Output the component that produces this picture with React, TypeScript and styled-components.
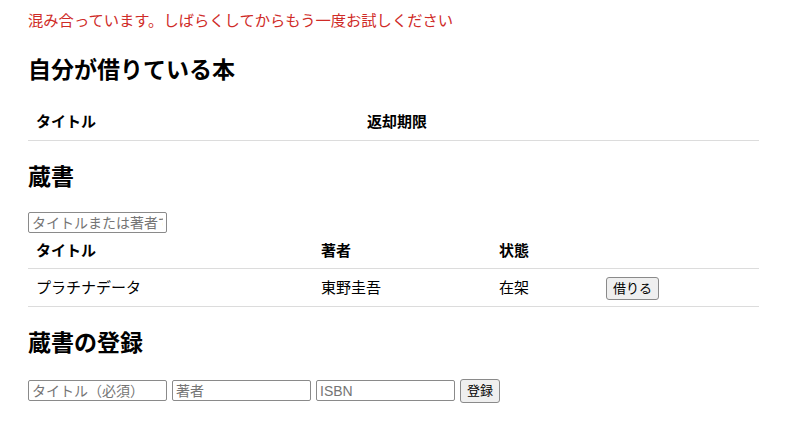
import styled, { createGlobalStyle } from "styled-components";

const GlobalStyle = createGlobalStyle`
  html, body {
    margin: 0;
    padding: 0;
    background: #ffffff;
  }
  body {
    font-family: "Liberation Sans", "Noto Sans CJK JP", sans-serif;
    color: #000;
  }
`;

const Page = styled.div`
  padding: 10px 41px 20px 28px;
  width: 731px;
`;

const ErrorText = styled.div`
  color: #cf2b27;
  font-size: 15.3px;
  line-height: 22px;
  height: 22px;
  white-space: nowrap;
`;

const SectionTitle = styled.h2<{ $top: number }>`
  margin: ${(p) => p.$top}px 0 0;
  font-size: 23px;
  line-height: 30px;
  font-weight: 700;
`;

const Table = styled.table<{ $top: number }>`
  margin-top: ${(p) => p.$top}px;
  width: 731px;
  border-collapse: collapse;
  table-layout: fixed;
  font-size: 15px;
`;

const HeadCell = styled.th<{ $width?: number; $pad?: string }>`
  width: ${(p) => (p.$width ? `${p.$width}px` : "auto")};
  text-align: left;
  font-weight: 700;
  line-height: 22px;
  padding: ${(p) => p.$pad || "8px 8px 7px"};
  border-bottom: 1px solid #dcdcdc;
  box-sizing: border-box;
`;

const Cell = styled.td`
  line-height: 23px;
  height: 23px;
  padding: 6px 8px;
  border-bottom: 1px solid #dcdcdc;
  vertical-align: middle;
`;

const TextInput = styled.input`
  box-sizing: border-box;
  width: 139px;
  height: 21px;
  margin: 0;
  padding: 1px 3px;
  border: 1px solid #8a8a8a;
  border-radius: 2px;
  font-family: "Liberation Sans", "Noto Sans CJK JP", sans-serif;
  font-size: 14px;
  color: #000;
  &::placeholder {
    color: #757575;
  }
`;

const SearchRow = styled.div`
  margin-top: 20px;
  display: flex;
`;

const Button = styled.button<{ $h?: number }>`
  box-sizing: border-box;
  height: ${(p) => p.$h || 23}px;
  margin: 0;
  padding: 0 6px;
  border: 1px solid #8a8a8a;
  border-radius: 3px;
  background: #efefef;
  font-family: "Liberation Sans", "Noto Sans CJK JP", sans-serif;
  font-size: 13px;
  line-height: 1;
  color: #000;
  vertical-align: middle;
  display: inline-flex;
  align-items: center;
`;

const FormRow = styled.form`
  margin-top: 21px;
  display: flex;
  align-items: center;
  gap: 5px;
`;

const App = () => (
  <>
    <GlobalStyle />
    <Page>
      <ErrorText>混み合っています。しばらくしてからもう一度お試しください</ErrorText>

      <SectionTitle $top={23}>自分が借りている本</SectionTitle>
      <Table $top={18}>
        <thead>
          <tr>
            <HeadCell $width={331}>タイトル</HeadCell>
            <HeadCell>返却期限</HeadCell>
          </tr>
        </thead>
      </Table>

      <SectionTitle $top={21}>蔵書</SectionTitle>
      <SearchRow>
        <TextInput placeholder="タイトルまたは著者で検索" />
      </SearchRow>
      <Table $top={1}>
        <thead>
          <tr>
            <HeadCell $width={285} $pad="6px 8px 6px">タイトル</HeadCell>
            <HeadCell $width={178} $pad="6px 8px 6px">著者</HeadCell>
            <HeadCell $width={107} $pad="6px 8px 6px">状態</HeadCell>
            <HeadCell $pad="6px 8px 6px"></HeadCell>
          </tr>
        </thead>
        <tbody>
          <tr>
            <Cell>プラチナデータ</Cell>
            <Cell>東野圭吾</Cell>
            <Cell>在架</Cell>
            <Cell>
              <Button type="button">借りる</Button>
            </Cell>
          </tr>
        </tbody>
      </Table>

      <SectionTitle $top={21}>蔵書の登録</SectionTitle>
      <FormRow onSubmit={(e) => e.preventDefault()}>
        <TextInput placeholder="タイトル（必須）" />
        <TextInput placeholder="著者" />
        <TextInput placeholder="ISBN" />
        <Button type="submit" $h={24}>登録</Button>
      </FormRow>
    </Page>
  </>
);

export default App;
